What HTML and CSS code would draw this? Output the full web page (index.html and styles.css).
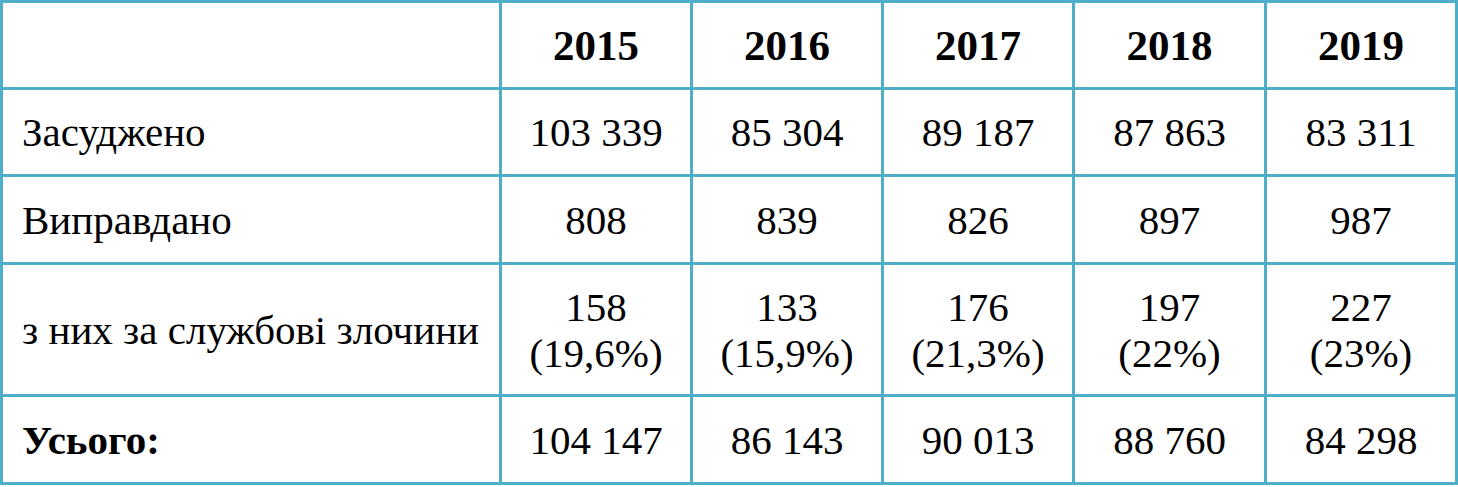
FILE: index.html
```html
<!DOCTYPE html>
<html lang="uk">
<head>
<meta charset="utf-8">
<title>Статистика</title>
<link rel="stylesheet" href="styles.css">
</head>
<body>
<table class="stats">
  <thead>
    <tr class="row-head">
      <th class="c-label"></th>
      <th class="c-year">2015</th>
      <th class="c-year">2016</th>
      <th class="c-year">2017</th>
      <th class="c-year c-wide">2018</th>
      <th class="c-year">2019</th>
    </tr>
  </thead>
  <tbody>
    <tr class="row-std">
      <td class="label">Засуджено</td>
      <td>103 339</td>
      <td>85 304</td>
      <td>89 187</td>
      <td>87 863</td>
      <td>83 311</td>
    </tr>
    <tr class="row-std row-b">
      <td class="label">Виправдано</td>
      <td>808</td>
      <td>839</td>
      <td>826</td>
      <td>897</td>
      <td>987</td>
    </tr>
    <tr class="row-tall">
      <td class="label">з них за службові злочини</td>
      <td>158<br>(19,6%)</td>
      <td>133<br>(15,9%)</td>
      <td>176<br>(21,3%)</td>
      <td>197<br>(22%)</td>
      <td>227<br>(23%)</td>
    </tr>
    <tr class="row-std row-b">
      <td class="label total">Усього:</td>
      <td>104 147</td>
      <td>86 143</td>
      <td>90 013</td>
      <td>88 760</td>
      <td>84 298</td>
    </tr>
  </tbody>
</table>
</body>
</html>
```

FILE: styles.css
```css
html, body {
  margin: 0;
  padding: 0;
  background: #ffffff;
}

.stats {
  border-collapse: separate;
  border-spacing: 0;
  table-layout: fixed;
  width: 1458px;
  border-top: 3px solid #4eaec8;
  border-left: 3px solid #4eaec8;
  font-family: "Liberation Serif", "DejaVu Serif", serif;
  font-size: 41px;
  line-height: 46px;
  color: #000000;
}

.stats th,
.stats td {
  box-sizing: border-box;
  border-right: 3px solid #4eaec8;
  border-bottom: 3px solid #4eaec8;
  padding: 0;
  text-align: center;
  vertical-align: middle;
  font-weight: normal;
}

.c-label { width: 499px; }
.c-year { width: 191px; }
.c-wide { width: 192px; }

.stats th.c-year {
  font-weight: bold;
  font-size: 43px;
  padding-top: 2px;
}

.row-head th { height: 87px; }
.row-std td { height: 87px; }
.row-b td { height: 88px; }
.row-tall td { height: 132px; }

.stats td.label {
  text-align: left;
  padding-left: 19px;
}

.stats td.total {
  font-weight: bold;
}
```
